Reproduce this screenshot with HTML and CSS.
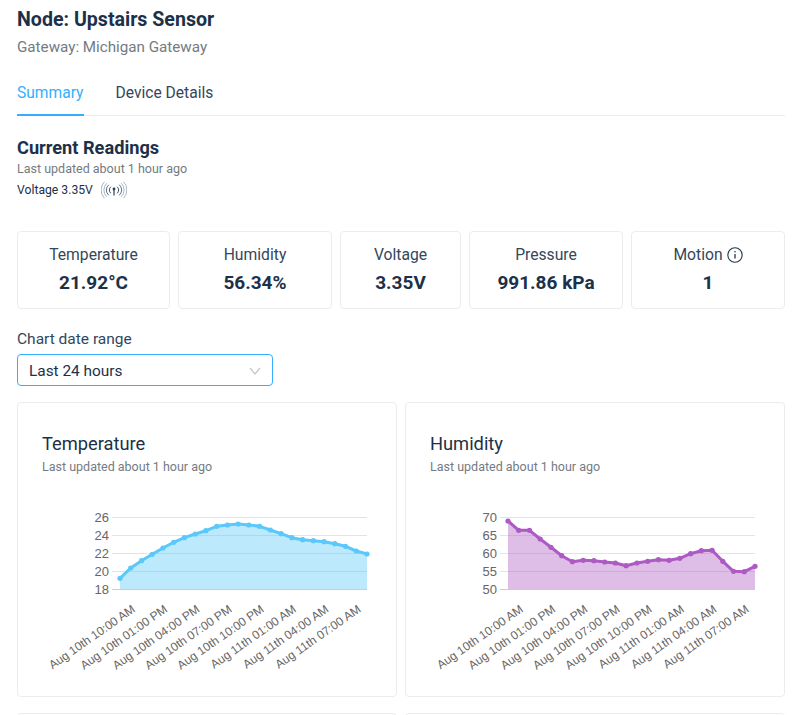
FILE: index.html
```html
<!DOCTYPE html>
<html lang="en">
<head>
  <meta charset="UTF-8" />
  <title>Node: Upstairs Sensor</title>
  <link rel="stylesheet" href="styles.css">
</head>
<body>
  <div class="page">
    <h1>Node: Upstairs Sensor</h1>
    <p class="gateway">Gateway: Michigan Gateway</p>

    <nav class="tabs">
      <a class="tab active">Summary</a>
      <a class="tab">Device Details</a>
    </nav>

    <h2>Current Readings</h2>
    <p class="updated">Last updated about 1 hour ago</p>
    <div class="voltage-line">
      <span>Voltage 3.35V</span>
      <svg class="signal" width="26" height="18" viewBox="0 0 26 18" fill="none" stroke="#8fa3b5" stroke-width="0.8" stroke-linecap="round">
        <path d="M5.5 2.5a9 9 0 0 0 0 13M20.5 2.5a9 9 0 0 1 0 13" />
        <path d="M3.2 1a11.5 11.5 0 0 0 0 16M22.8 1a11.5 11.5 0 0 1 0 16" />
        <path d="M7.5 4a6.5 6.5 0 0 0 0 10M18.5 4a6.5 6.5 0 0 1 0 10" stroke="#5f7488" stroke-width="1" />
        <path d="M9.6 6a3.8 3.8 0 0 0 0 6M16.4 6a3.8 3.8 0 0 1 0 6" stroke="#3d5166" stroke-width="1" />
        <circle cx="13" cy="8" r="1.4" fill="#2b3f55" stroke="none" />
        <path d="M13 8v6" stroke="#2b3f55" stroke-width="1.2" />
      </svg>
    </div>

    <section class="stats">
      <div class="stat"><div class="stat-label">Temperature</div><div class="stat-value">21.92°C</div></div>
      <div class="stat"><div class="stat-label">Humidity</div><div class="stat-value">56.34%</div></div>
      <div class="stat"><div class="stat-label">Voltage</div><div class="stat-value">3.35V</div></div>
      <div class="stat"><div class="stat-label">Pressure</div><div class="stat-value">991.86 kPa</div></div>
      <div class="stat">
        <div class="stat-label">Motion
          <svg class="info" width="16" height="16" viewBox="0 0 16 16" fill="none" stroke="#1f3349" stroke-width="1.1">
            <circle cx="8" cy="8" r="7.2" />
            <path d="M8 7v4.6" stroke-width="1.3" />
            <circle cx="8" cy="4.8" r="0.8" fill="#1f3349" stroke="none" />
          </svg>
        </div>
        <div class="stat-value">1</div>
      </div>
    </section>

    <label class="range-label">Chart date range</label>
    <div class="range-select">
      <span>Last 24 hours</span>
      <svg width="12" height="8" viewBox="0 0 12 8" fill="none" stroke="#c3c8cc" stroke-width="1.2"><path d="M1 1l5 6 5-6" /></svg>
    </div>

    <section class="charts">
      <div class="card">
        <h3>Temperature</h3>
        <p class="card-updated">Last updated about 1 hour ago</p>
        <svg class="chart" width="330" height="190" viewBox="42 500 330 190">
          <defs>
            <marker id="dot-blue" viewBox="0 0 6 6" refX="3" refY="3" markerWidth="6" markerHeight="6" markerUnits="userSpaceOnUse"><circle cx="3" cy="3" r="2.6" fill="#5ac8fa" /></marker>
          </defs>
          <g class="grid">
            <line x1="112" y1="517.5" x2="367" y2="517.5" />
            <line x1="112" y1="535.5" x2="367" y2="535.5" />
            <line x1="112" y1="553.5" x2="367" y2="553.5" />
            <line x1="112" y1="571.5" x2="367" y2="571.5" />
            <line class="base" x1="112" y1="589.5" x2="367" y2="589.5" />
          </g>
          <g class="y-ticks">
            <text x="109" y="521.5">26</text>
            <text x="109" y="539.5">24</text>
            <text x="109" y="557.5">22</text>
            <text x="109" y="575.5">20</text>
            <text x="109" y="593.5">18</text>
          </g>
          <polygon class="area-blue" points="120,589 120,578.3 130.7,568 141.5,560.7 152.2,554.3 163,548 173.7,542.3 184.4,537.7 195.2,534 205.9,530.7 216.7,526.3 227.4,525 238.1,524 248.9,525 259.6,526.3 270.4,530 281.1,533.7 291.8,537.7 302.6,539.7 313.3,540.7 324.1,541.7 334.8,543.7 345.5,546.3 356.3,551 367,554 367,589" />
          <polyline class="line-blue" points="120,578.3 130.7,568 141.5,560.7 152.2,554.3 163,548 173.7,542.3 184.4,537.7 195.2,534 205.9,530.7 216.7,526.3 227.4,525 238.1,524 248.9,525 259.6,526.3 270.4,530 281.1,533.7 291.8,537.7 302.6,539.7 313.3,540.7 324.1,541.7 334.8,543.7 345.5,546.3 356.3,551 367,554" />
          <g class="x-ticks">
            <text transform="translate(136 611) rotate(-35)">Aug 10th 10:00 AM</text>
            <text transform="translate(168.2 611) rotate(-35)">Aug 10th 01:00 PM</text>
            <text transform="translate(200.4 611) rotate(-35)">Aug 10th 04:00 PM</text>
            <text transform="translate(232.6 611) rotate(-35)">Aug 10th 07:00 PM</text>
            <text transform="translate(264.8 611) rotate(-35)">Aug 10th 10:00 PM</text>
            <text transform="translate(297 611) rotate(-35)">Aug 11th 01:00 AM</text>
            <text transform="translate(329.4 611) rotate(-35)">Aug 11th 04:00 AM</text>
            <text transform="translate(361.7 611) rotate(-35)">Aug 11th 07:00 AM</text>
          </g>
        </svg>
      </div>

      <div class="card">
        <h3>Humidity</h3>
        <p class="card-updated">Last updated about 1 hour ago</p>
        <svg class="chart" width="330" height="190" viewBox="430 500 330 190">
          <defs>
            <marker id="dot-purple" viewBox="0 0 6 6" refX="3" refY="3" markerWidth="6" markerHeight="6" markerUnits="userSpaceOnUse"><circle cx="3" cy="3" r="2.6" fill="#ad5ac3" /></marker>
          </defs>
          <g class="grid">
            <line x1="500" y1="517.5" x2="755" y2="517.5" />
            <line x1="500" y1="535.5" x2="755" y2="535.5" />
            <line x1="500" y1="553.5" x2="755" y2="553.5" />
            <line x1="500" y1="571.5" x2="755" y2="571.5" />
            <line class="base" x1="500" y1="589.5" x2="755" y2="589.5" />
          </g>
          <g class="y-ticks">
            <text x="497" y="521.5">70</text>
            <text x="497" y="539.5">65</text>
            <text x="497" y="557.5">60</text>
            <text x="497" y="575.5">55</text>
            <text x="497" y="593.5">50</text>
          </g>
          <polygon class="area-purple" points="508,589 508,521 518.7,530.3 529.5,530.3 540.2,539 551,547.3 561.7,555.7 572.4,561.7 583.2,560.3 593.9,560.7 604.7,562 615.4,563 626.1,565.7 636.9,563 647.6,561.3 658.4,559.7 669.1,560.3 679.8,558.3 690.6,553.7 701.3,550.7 712.1,550.3 722.8,561.3 733.5,571.3 744.3,571.7 755,566.3 755,589" />
          <polyline class="line-purple" points="508,521 518.7,530.3 529.5,530.3 540.2,539 551,547.3 561.7,555.7 572.4,561.7 583.2,560.3 593.9,560.7 604.7,562 615.4,563 626.1,565.7 636.9,563 647.6,561.3 658.4,559.7 669.1,560.3 679.8,558.3 690.6,553.7 701.3,550.7 712.1,550.3 722.8,561.3 733.5,571.3 744.3,571.7 755,566.3" />
          <g class="x-ticks">
            <text transform="translate(524 611) rotate(-35)">Aug 10th 10:00 AM</text>
            <text transform="translate(556.2 611) rotate(-35)">Aug 10th 01:00 PM</text>
            <text transform="translate(588.4 611) rotate(-35)">Aug 10th 04:00 PM</text>
            <text transform="translate(620.6 611) rotate(-35)">Aug 10th 07:00 PM</text>
            <text transform="translate(652.8 611) rotate(-35)">Aug 10th 10:00 PM</text>
            <text transform="translate(685 611) rotate(-35)">Aug 11th 01:00 AM</text>
            <text transform="translate(717.4 611) rotate(-35)">Aug 11th 04:00 AM</text>
            <text transform="translate(749.7 611) rotate(-35)">Aug 11th 07:00 AM</text>
          </g>
        </svg>
      </div>

      <div class="card card-next"></div>
      <div class="card card-next"></div>
    </section>
  </div>
</body>
</html>
```
FILE: styles.css
```css
* {
  box-sizing: border-box;
}

body {
  margin: 0;
  background: #fff;
  color: #1c3149;
  font-family: Roboto, "Liberation Sans", sans-serif;
}

.page {
  height: 715px;
  overflow: hidden;
  padding: 8px 21px 0 17px;
}

h1 {
  margin: 0;
  font-size: 19.6px;
  line-height: 24px;
  font-weight: 700;
}

.gateway {
  margin: 6px 0 0;
  font-size: 15.2px;
  line-height: 18px;
  color: #737b83;
}

.tabs {
  display: flex;
  gap: 32px;
  margin-top: 19px;
  border-bottom: 1px solid #e9ecef;
}

.tab {
  padding: 9px 0 12px;
  margin-bottom: -1px;
  font-size: 15.6px;
  line-height: 18px;
  color: #33475b;
  border-bottom: 2px solid transparent;
}

.tab.active {
  color: #35aeff;
  border-bottom-color: #35aeff;
}

h2 {
  margin: 22px 0 0;
  font-size: 18.2px;
  line-height: 20px;
  font-weight: 700;
}

.updated {
  margin: 3px 0 0;
  font-size: 12.5px;
  line-height: 16px;
  color: #737b83;
}

.voltage-line {
  display: flex;
  align-items: center;
  gap: 8px;
  margin-top: 4px;
  font-size: 12.2px;
  line-height: 18px;
}

.stats {
  display: grid;
  grid-template-columns: 153px 154px 121px 154px 154px;
  gap: 8px;
  margin-top: 32px;
}

.stat {
  height: 78px;
  padding-top: 14px;
  border: 1px solid #ececec;
  border-radius: 4px;
  text-align: center;
}

.stat-label {
  display: flex;
  justify-content: center;
  align-items: center;
  gap: 4px;
  font-size: 15.7px;
  line-height: 18px;
  color: #33475b;
}

.stat-value {
  margin-top: 7px;
  font-size: 19px;
  line-height: 24px;
  font-weight: 700;
}

.range-label {
  display: block;
  margin-top: 21px;
  font-size: 15.5px;
  line-height: 18px;
  color: #33475b;
}

.range-select {
  display: flex;
  justify-content: space-between;
  align-items: center;
  width: 256px;
  height: 32px;
  margin-top: 6px;
  padding: 1px 11px 0;
  border: 1px solid #35aeff;
  border-radius: 4px;
  font-size: 15.4px;
}

.charts {
  display: grid;
  grid-template-columns: 380px 380px;
  gap: 16px 8px;
  margin-top: 16px;
}

.card {
  height: 295px;
  padding: 29px 24px 0;
  border: 1px solid #ececec;
  border-radius: 4px;
}

.card-next {
  height: 40px;
}

h3 {
  margin: 0;
  font-size: 18.3px;
  line-height: 24px;
  font-weight: 400;
}

.card-updated {
  margin: 3px 0 0;
  font-size: 12.5px;
  line-height: 16px;
  color: #737b83;
}

.chart {
  display: block;
  margin-top: 25px;
}

.chart text {
  font-family: "Liberation Sans", sans-serif;
  fill: #666;
}

.grid line {
  stroke: #e3e3e3;
  stroke-width: 1;
}

.grid line.base {
  stroke: #ccc;
}

.y-ticks text {
  font-size: 13px;
  text-anchor: end;
}

.x-ticks text {
  font-size: 12px;
  text-anchor: end;
}

.area-blue {
  fill: rgba(90, 200, 250, 0.4);
}

.line-blue {
  fill: none;
  stroke: #5ac8fa;
  stroke-width: 3;
  stroke-linejoin: round;
  marker: url(#dot-blue);
}

.area-purple {
  fill: rgba(173, 90, 195, 0.4);
}

.line-purple {
  fill: none;
  stroke: #ad5ac3;
  stroke-width: 3;
  stroke-linejoin: round;
  marker: url(#dot-purple);
}
```
